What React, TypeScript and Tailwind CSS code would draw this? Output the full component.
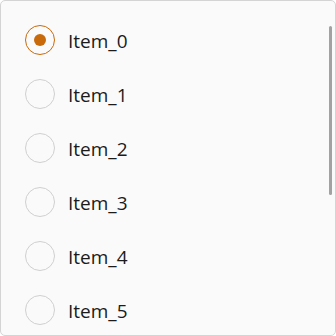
const items = ["Item_0", "Item_1", "Item_2", "Item_3", "Item_4", "Item_5"];

export default function App() {
  return (
    <div className="relative h-[336px] w-[336px] overflow-hidden rounded-[5px] border border-[#d4d4d4] bg-[#fafafa] font-['Open_Sans',sans-serif]">
      <div className="flex flex-col pl-[24px] pt-[12px]">
        {items.map((label, i) => (
          <div key={label} className="flex h-[54px] items-center gap-[13px]">
            {i === 0 ? (
              <div className="flex h-[30px] w-[30px] items-center justify-center rounded-full border-[1.5px] border-[#c96a0a]">
                <div className="h-[12px] w-[12px] rounded-full bg-[#c96a0a]" />
              </div>
            ) : (
              <div className="h-[30px] w-[30px] rounded-full border-[1.5px] border-[#d0d0d0]" />
            )}
            <span className="pt-[2px] text-[19px] leading-none text-[#1b1b1b]">{label}</span>
          </div>
        ))}
      </div>
      <div className="absolute left-[328px] top-[25px] h-[169px] w-[3px] rounded-full bg-[#a2a2a2]" />
    </div>
  );
}
